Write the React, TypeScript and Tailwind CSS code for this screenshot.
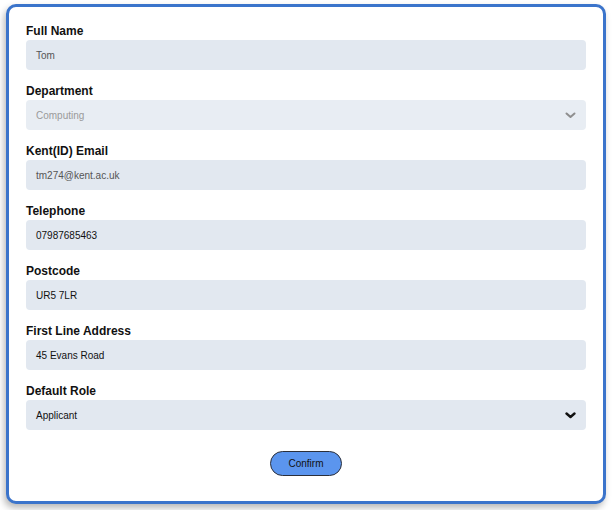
import React from 'react';

const FIELDS = [
  { label: 'Full Name', value: 'Tom', tone: 'text-[#555]' },
  { label: 'Department', value: 'Computing', tone: 'text-[#9a9a9a]', select: true, disabled: true },
  { label: 'Kent(ID) Email', value: 'tm274@kent.ac.uk', tone: 'text-[#555]' },
  { label: 'Telephone', value: '07987685463', tone: 'text-[#111]' },
  { label: 'Postcode', value: 'UR5 7LR', tone: 'text-[#111]' },
  { label: 'First Line Address', value: '45 Evans Road', tone: 'text-[#111]' },
  { label: 'Default Role', value: 'Applicant', tone: 'text-[#111]', select: true },
];

const Chevron = ({ muted }: { muted?: boolean }) => (
  <svg width="11" height="7" viewBox="0 0 11 7" fill="none">
    <path
      d="M1.5 1.5 L5.5 5 L9.5 1.5"
      stroke={muted ? '#8f8f8f' : '#111'}
      strokeWidth={muted ? 2 : 2.4}
      strokeLinecap="round"
      strokeLinejoin="round"
    />
  </svg>
);

export default function App() {
  return (
    <div className="min-h-[510px] bg-white pt-[4px] pl-[6px] font-['Liberation_Sans',Arial,sans-serif]">
      <div className="w-[600px] h-[500px] rounded-[10px] border-[3px] border-[#3b74cb] bg-white px-[17px] pt-[16px] shadow-[-2px_4px_7px_rgba(0,0,0,0.28)] flex flex-col">
        {FIELDS.map((f) => (
          <div key={f.label} className="mb-[13px] flex flex-col">
            <label className="text-[12px] leading-[16px] font-bold text-[#111] mb-[1px]">{f.label}</label>
            <div
              className={`h-[30px] rounded-[4px] px-[10px] flex items-center justify-between text-[10px] ${
                f.disabled ? 'bg-[#e8edf3]' : 'bg-[#e2e8f0]'
              } ${f.tone}`}
            >
              <span>{f.value}</span>
              {f.select && <Chevron muted={f.disabled} />}
            </div>
          </div>
        ))}
        <div className="flex justify-center mt-[8px]">
          <button className="w-[72px] h-[25px] rounded-full border border-[#2b2f3a] bg-[#5b95ee] text-[10px] text-[#111]">
            Confirm
          </button>
        </div>
      </div>
    </div>
  );
}
